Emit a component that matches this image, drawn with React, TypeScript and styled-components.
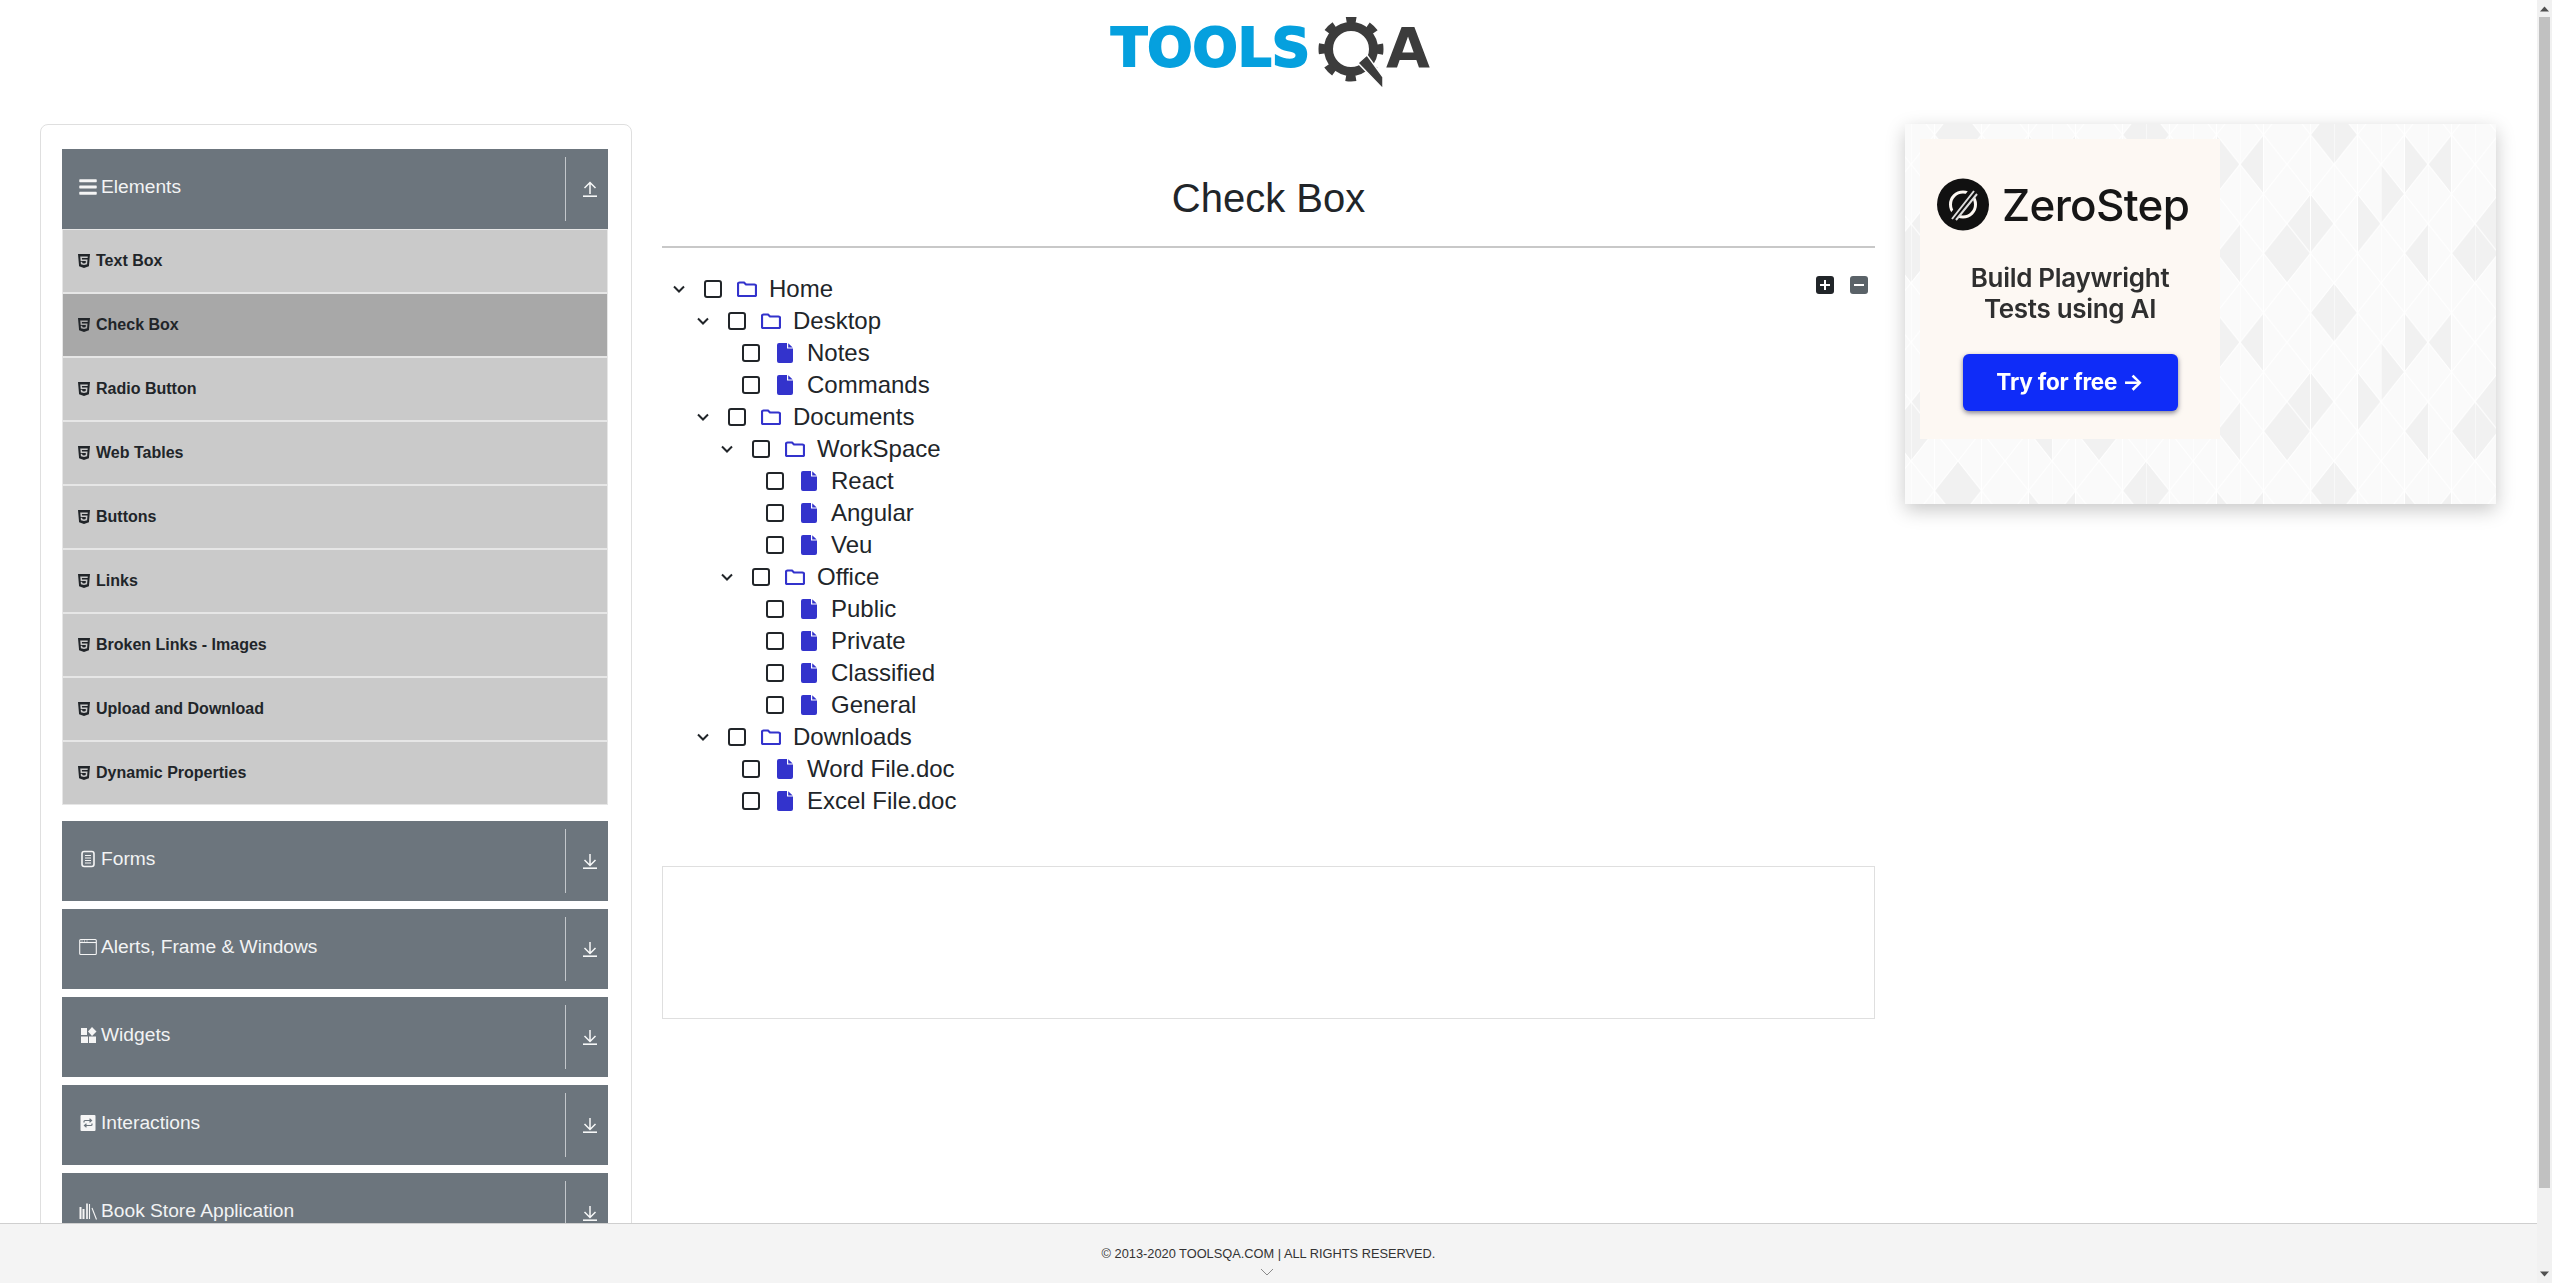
import React from 'react'
import styled, { createGlobalStyle } from 'styled-components'
import { FaBars, FaHtml5 } from 'react-icons/fa'

const GlobalStyle = createGlobalStyle`
	html, body {
		margin: 0;
		padding: 0;
		height: 100%;
		overflow: hidden;
		background: #fff;
	}
	* {
		box-sizing: border-box;
	}
	body {
		font-family: 'Liberation Sans', Arial, sans-serif;
		color: #212529;
	}
`

const Shell = styled.div`
	display: flex;
	width: 2552px;
	height: 1283px;
	overflow: hidden;
`

const Viewport = styled.div`
	flex: 1;
	min-width: 0;
	display: flex;
	flex-direction: column;
`

const Page = styled.div`
	flex: 1;
	min-height: 0;
	overflow: hidden;
`

const Banner = styled.header`
	height: 124px;
	padding: 17px 0 0 3px;
	display: flex;
	justify-content: center;
	align-items: flex-start;
`

const Columns = styled.div`
	display: flex;
	align-items: flex-start;
	gap: 30px;
	padding-left: 40px;
`

const Sidebar = styled.aside`
	width: 592px;
	flex: none;
	border: 1px solid #dfdfdf;
	border-radius: 8px;
	padding: 24px 23px 0 21px;
`

const Group = styled.section`
	margin-bottom: 8px;
`

const GroupHeader = styled.div`
	height: 80px;
	background: #6c757d;
	color: #f2f3f4;
	display: flex;
	align-items: center;
`

const GroupTitle = styled.div`
	flex: 1;
	display: flex;
	align-items: center;
	gap: 4px;
	padding: 0 0 4px 17px;
	font-size: 19.2px;
`

const GroupIcon = styled.span`
	width: 18px;
	height: 18px;
	display: flex;
	align-items: center;
	justify-content: center;
	color: #f5f5f5;
`

const GroupDivider = styled.div`
	width: 1px;
	height: 64px;
	background: #c3c7cb;
`

const ArrowSlot = styled.div`
	width: 42px;
	padding-left: 5px;
	display: flex;
	align-items: center;
	justify-content: center;
`

const MenuList = styled.ul`
	list-style: none;
	margin: 0 0 16px;
	padding: 0;
`

const MenuItem = styled.li<{ $active?: boolean }>`
	height: 64px;
	border: 1px solid #e6e6e6;
	background: ${p => (p.$active ? '#a8a8a8' : '#cacaca')};
	display: flex;
	align-items: center;
	gap: 4px;
	padding: 0 0 1px 13px;
	font-size: 16px;
	font-weight: 700;
	color: #212529;

	svg {
		flex: none;
	}
`

const Main = styled.main`
	width: 1213px;
	flex: none;
`

const Title = styled.h1`
	height: 124px;
	margin: 0;
	padding-top: 51px;
	border-bottom: 2px solid #c8c8c8;
	text-align: center;
	font-size: 40px;
	line-height: 46px;
	font-weight: 400;
	color: #212529;
`

const TreePanel = styled.div`
	display: flex;
	justify-content: space-between;
	align-items: flex-start;
	padding: 25px 7px 0 5px;
`

const TreeList = styled.div`
	display: flex;
	flex-direction: column;
`

const TreeRow = styled.div<{ $level: number }>`
	height: 32px;
	display: flex;
	align-items: center;
	padding-left: ${p => p.$level * 24}px;
	font-size: 24px;
	color: #212529;
`

const Toggle = styled.span<{ $leaf?: boolean }>`
	width: ${p => (p.$leaf ? '27px' : '24px')};
	margin-right: ${p => (p.$leaf ? '0' : '13px')};
	display: flex;
	justify-content: center;
	flex: none;
`

const Check = styled.span`
	width: 18px;
	height: 18px;
	border: 2px solid #212529;
	border-radius: 3px;
	margin-right: 15px;
	flex: none;
`

const NodeIcon = styled.span`
	width: 20px;
	height: 20px;
	margin-right: 12px;
	display: flex;
	align-items: center;
	justify-content: center;
	flex: none;
`

const TreeTools = styled.div`
	display: flex;
	gap: 16px;
	margin-top: 3px;
`

const ToolButton = styled.span<{ $muted?: boolean }>`
	width: 18px;
	height: 18px;
	border-radius: 3px;
	background: ${p => (p.$muted ? '#5a6268' : '#212529')};
	display: flex;
	align-items: center;
	justify-content: center;
`

const ResultBox = styled.div`
	height: 153px;
	margin-top: 49px;
	border: 1px solid #dfdfdf;
`

const Ad = styled.aside`
	position: relative;
	width: 591px;
	height: 380px;
	flex: none;
	padding: 15px;
	background: #fafafa;
	box-shadow: 0 6px 18px rgba(0, 0, 0, 0.22);
`

const AdPattern = styled.svg`
	position: absolute;
	inset: 0;
	width: 100%;
	height: 100%;
`

const AdCard = styled.div`
	position: relative;
	width: 300px;
	height: 300px;
	padding-top: 39px;
	background: #fdf8f3;
	display: flex;
	flex-direction: column;
	align-items: center;
	font-family: Inter, 'Liberation Sans', sans-serif;
	filter: blur(0.4px);
`

const AdBrand = styled.div`
	align-self: flex-start;
	height: 53px;
	padding-left: 17px;
	display: flex;
	align-items: center;
	gap: 13px;
	font-size: 44px;
	font-weight: 500;
	letter-spacing: -0.7px;
	color: #161616;
`

const AdText = styled.div`
	margin-top: 31px;
	text-align: center;
	font-size: 26px;
	line-height: 31px;
	font-weight: 600;
	letter-spacing: -0.3px;
	color: #2f2f2f;
`

const AdButton = styled.div`
	width: 215px;
	height: 57px;
	margin-top: 30px;
	padding-bottom: 2px;
	border-radius: 6px;
	background: #0f2cf8;
	box-shadow: 0 2px 5px rgba(30, 30, 60, 0.55);
	color: #fff;
	display: flex;
	align-items: center;
	justify-content: center;
	font-size: 22.5px;
	font-weight: 700;
	letter-spacing: -0.2px;
`

const Footer = styled.footer`
	height: 60px;
	flex: none;
	border-top: 1px solid #cfcfcf;
	background: #f4f4f4;
	display: flex;
	flex-direction: column;
	align-items: center;
	padding-top: 22px;
	font-size: 12.8px;
	line-height: 16px;
	color: #333;

	svg {
		margin: 6px 3px 0 0;
	}
`

const ScrollTrack = styled.div`
	width: 15px;
	flex: none;
	background: #f1f1f1;
	display: flex;
	flex-direction: column;
	align-items: center;
`

const ScrollCap = styled.div`
	height: 17px;
	flex: none;
	display: flex;
	align-items: center;
	justify-content: center;
`

const ScrollThumb = styled.div`
	width: 11px;
	flex: 1;
	background: #c1c1c1;
`

const ScrollRest = styled.div`
	height: 95px;
	flex: none;
	display: flex;
	flex-direction: column;
	justify-content: flex-end;
	align-items: center;
	padding-bottom: 6px;
`

const Logo = () => (
	<svg width="320" height="72" viewBox="0 0 320 72">
		<text
			x="1"
			y="49"
			fontFamily="'DejaVu Sans', sans-serif"
			fontWeight="700"
			fontSize="53"
			textLength="199"
			lengthAdjust="spacingAndGlyphs"
			fill="#05a0de"
			stroke="#05a0de"
			strokeWidth="2"
		>
			TOOLS
		</text>
		<circle cx="241" cy="32" r="22.5" fill="none" stroke="#3c3c3c" strokeWidth="9" />
		<circle
			cx="241"
			cy="32"
			r="29"
			fill="none"
			stroke="#3c3c3c"
			strokeWidth="7"
			strokeDasharray="10 12.78"
			strokeDashoffset="5"
			transform="rotate(-90 241 32)"
		/>
		<polygon points="248,46 257,38 273,60 273,72" fill="#3c3c3c" stroke="#fff" strokeWidth="1.5" />
		<text
			x="276"
			y="50"
			fontFamily="'DejaVu Sans', sans-serif"
			fontWeight="700"
			fontSize="55"
			textLength="44"
			lengthAdjust="spacingAndGlyphs"
			fill="#3c3c3c"
		>
			A
		</text>
	</svg>
)

const FormsIcon = () => (
	<svg width="18" height="18" viewBox="0 0 18 18">
		<rect x="3" y="1.5" width="12" height="15" rx="2.2" fill="none" stroke="currentColor" strokeWidth="1.6" />
		<path d="M6 5.5h6M6 8h6M6 10.5h6M6 13h6" stroke="currentColor" strokeWidth="1" />
	</svg>
)

const WindowIcon = () => (
	<svg width="18" height="18" viewBox="0 0 18 18">
		<rect x="0.7" y="1.5" width="16.6" height="15" rx="1" fill="none" stroke="currentColor" strokeWidth="1.1" />
		<path d="M1 4.5h16" stroke="currentColor" strokeWidth="1.1" />
		<path d="M2.5 3h1M5 3h1M7.5 3h1" stroke="currentColor" strokeWidth="1" />
	</svg>
)

const WidgetsIcon = () => (
	<svg width="18" height="18" viewBox="0 0 18 18">
		<path d="M2 2h6v7H2zM2 10.500h7V17H2zM10 10.500h7V17h-7zM13 1l4.500 4.500L13 10 9 5.500z" fill="currentColor" />
	</svg>
)

const InteractionsIcon = () => (
	<svg width="18" height="18" viewBox="0 0 18 18">
		<rect x="1.5" y="1" width="15" height="16" rx="1" fill="currentColor" />
		<path
			d="M5 8.500V7.500a1 1 0 0 1 1-1h6M10.500 4.800L12.500 6.500L10.500 8.200M13 9.500v1a1 1 0 0 1-1 1H6M7.500 9.800L5.500 11.500L7.500 13.200"
			fill="none"
			stroke="#6c757d"
			strokeWidth="1.200"
		/>
	</svg>
)

const LibraryIcon = () => (
	<svg width="18" height="18" viewBox="0 0 18 18">
		<path d="M0.500 5h2v12h-2zM3.500 7h2v10h-2z" fill="currentColor" />
		<path d="M7 1.500h2V17H7z" fill="currentColor" opacity="0.85" />
		<path d="M10.500 2v15M13 6l4.500 11.500" fill="none" stroke="currentColor" strokeWidth="1.100" />
	</svg>
)

const TransferArrow = ({ up }: { up?: boolean }) => (
	<svg width="14" height="16" viewBox="0 0 14 16">
		<path
			d={up ? 'M7 13V1.500M1.500 7L7 1.500L12.500 7' : 'M7 1v11.500M1.500 7L7 12.500L12.500 7'}
			fill="none"
			stroke="#f7f8f8"
			strokeWidth="1.500"
		/>
		<path d="M0 15.200h14" stroke="#f7f8f8" strokeWidth="1.600" />
	</svg>
)

const ChevronIcon = () => (
	<svg width="12" height="8" viewBox="0 0 12 8">
		<path d="M1 1.500L6 6.500L11 1.500" fill="none" stroke="#212529" strokeWidth="2" />
	</svg>
)

const FolderIcon = () => (
	<svg width="20" height="16" viewBox="0 0 20 16">
		<path
			d="M1 14V3a1.500 1.500 0 0 1 1.500-1.500H7L9 3.500h8.500A1.500 1.500 0 0 1 19 5v9a1 1 0 0 1-1 1H2a1 1 0 0 1-1-1z"
			fill="none"
			stroke="#3333cc"
			strokeWidth="2.200"
		/>
	</svg>
)

const FileIcon = () => (
	<svg width="16" height="20" viewBox="0 0 16 20">
		<path
			d="M2 0h8v5.500h6V18a2 2 0 0 1-2 2H2a2 2 0 0 1-2-2V2a2 2 0 0 1 2-2zM11.200 0.300L15.700 4.400h-4.500z"
			fill="#3333cc"
		/>
	</svg>
)

const TreeNode = ({ level, label, leaf }: { level: number; label: string; leaf?: boolean }) => (
	<TreeRow $level={level}>
		<Toggle $leaf={leaf}>{!leaf && <ChevronIcon />}</Toggle>
		<Check />
		<NodeIcon>{leaf ? <FileIcon /> : <FolderIcon />}</NodeIcon>
		{label}
	</TreeRow>
)

const ZeroStepMark = () => (
	<svg width="52" height="53" viewBox="0 0 52 53">
		<circle cx="26" cy="26.500" r="26" fill="#111" />
		<circle cx="26" cy="26.500" r="12.500" fill="none" stroke="#fdf8f3" strokeWidth="3" />
		<path d="M13 43L39 10" stroke="#111" strokeWidth="9" />
		<path d="M15 41L37 13M19 42L40 16" stroke="#ddd" strokeWidth="2" />
	</svg>
)

// shaded triangles of the ad backdrop: x, top of the vertical edge, side the apex points to
const shadedTriangles: [number, number, number][] = [
	[47, 0, -1],
	[47, 0, 1],
	[117.5, 29.67, 1],
	[164.5, 29.67, -1],
	[23.5, 89, -1],
	[23.5, 89, 1],
	[141, 118.67, -1],
	[188, 118.67, -1],
	[0, 118.67, 1],
	[94, 59.33, 1],
	[70.5, 89, 1],
]

const trianglePath = shadedTriangles
	.map(([x, y, side]) => `M${x} ${y}L${x + side * 23.5} ${y + 29.67}L${x} ${y + 59.33}z`)
	.join('')

const AdBackdrop = () => (
	<AdPattern>
		<defs>
			<pattern
				id="adTriangles"
				width="188"
				height="178"
				patternUnits="userSpaceOnUse"
				patternTransform="translate(6 -19)"
			>
				<path d={trianglePath} fill="#f1f1f1" />
			</pattern>
			<pattern
				id="adLines"
				width="47"
				height="59.33"
				patternUnits="userSpaceOnUse"
				patternTransform="translate(6 -19)"
			>
				<path d="M0 0L47 59.33M47 0L0 59.33M0 0V59.33M23.5 0V59.33" fill="none" stroke="#fff" strokeWidth="1" />
			</pattern>
		</defs>
		<rect width="100%" height="100%" fill="url(#adTriangles)" />
		<rect width="100%" height="100%" fill="url(#adLines)" />
	</AdPattern>
)

const menuItems = [
	'Text Box',
	'Check Box',
	'Radio Button',
	'Web Tables',
	'Buttons',
	'Links',
	'Broken Links - Images',
	'Upload and Download',
	'Dynamic Properties',
]

const otherGroups = [
	{ title: 'Forms', icon: <FormsIcon /> },
	{ title: 'Alerts, Frame & Windows', icon: <WindowIcon /> },
	{ title: 'Widgets', icon: <WidgetsIcon /> },
	{ title: 'Interactions', icon: <InteractionsIcon /> },
	{ title: 'Book Store Application', icon: <LibraryIcon /> },
]

const treeNodes = [
	{ level: 0, label: 'Home' },
	{ level: 1, label: 'Desktop' },
	{ level: 2, label: 'Notes', leaf: true },
	{ level: 2, label: 'Commands', leaf: true },
	{ level: 1, label: 'Documents' },
	{ level: 2, label: 'WorkSpace' },
	{ level: 3, label: 'React', leaf: true },
	{ level: 3, label: 'Angular', leaf: true },
	{ level: 3, label: 'Veu', leaf: true },
	{ level: 2, label: 'Office' },
	{ level: 3, label: 'Public', leaf: true },
	{ level: 3, label: 'Private', leaf: true },
	{ level: 3, label: 'Classified', leaf: true },
	{ level: 3, label: 'General', leaf: true },
	{ level: 1, label: 'Downloads' },
	{ level: 2, label: 'Word File.doc', leaf: true },
	{ level: 2, label: 'Excel File.doc', leaf: true },
]

export default function App() {
	return (
		<Shell>
			<GlobalStyle />
			<Viewport>
				<Page>
					<Banner>
						<Logo />
					</Banner>
					<Columns>
						<Sidebar>
							<Group>
								<GroupHeader>
									<GroupTitle>
										<GroupIcon>
											<FaBars size={20} />
										</GroupIcon>
										Elements
									</GroupTitle>
									<GroupDivider />
									<ArrowSlot>
										<TransferArrow up />
									</ArrowSlot>
								</GroupHeader>
								<MenuList>
									{menuItems.map(item => (
										<MenuItem key={item} $active={item === 'Check Box'}>
											<FaHtml5 size={16} />
											{item}
										</MenuItem>
									))}
								</MenuList>
							</Group>
							{otherGroups.map(group => (
								<Group key={group.title}>
									<GroupHeader>
										<GroupTitle>
											<GroupIcon>{group.icon}</GroupIcon>
											{group.title}
										</GroupTitle>
										<GroupDivider />
										<ArrowSlot>
											<TransferArrow />
										</ArrowSlot>
									</GroupHeader>
								</Group>
							))}
						</Sidebar>
						<Main>
							<Title>Check Box</Title>
							<TreePanel>
								<TreeList>
									{treeNodes.map(node => (
										<TreeNode key={node.label} {...node} />
									))}
								</TreeList>
								<TreeTools>
									<ToolButton>
										<svg width="12" height="12" viewBox="0 0 12 12">
											<path d="M6 1v10M1 6h10" stroke="#fff" strokeWidth="2" />
										</svg>
									</ToolButton>
									<ToolButton $muted>
										<svg width="12" height="12" viewBox="0 0 12 12">
											<path d="M1 6h10" stroke="#fff" strokeWidth="2" />
										</svg>
									</ToolButton>
								</TreeTools>
							</TreePanel>
							<ResultBox />
						</Main>
						<Ad>
							<AdBackdrop />
							<AdCard>
								<AdBrand>
									<ZeroStepMark />
									ZeroStep
								</AdBrand>
								<AdText>
									Build Playwright
									<br />
									Tests using AI
								</AdText>
								<AdButton>Try for free →</AdButton>
							</AdCard>
						</Ad>
					</Columns>
				</Page>
				<Footer>
					<span>© 2013-2020 TOOLSQA.COM | ALL RIGHTS RESERVED.</span>
					<svg width="14" height="8" viewBox="0 0 14 8">
						<path d="M1 1l6 6 6-6" fill="none" stroke="#8a8a8a" strokeWidth="1" />
					</svg>
				</Footer>
			</Viewport>
			<ScrollTrack>
				<ScrollCap>
					<svg width="9" height="6" viewBox="0 0 9 6">
						<path d="M0 5.500L4.500 0.500L9 5.500z" fill="#505050" />
					</svg>
				</ScrollCap>
				<ScrollThumb />
				<ScrollRest>
					<svg width="9" height="6" viewBox="0 0 9 6">
						<path d="M0 0.500L4.500 5.500L9 0.500z" fill="#505050" />
					</svg>
				</ScrollRest>
			</ScrollTrack>
		</Shell>
	)
}
